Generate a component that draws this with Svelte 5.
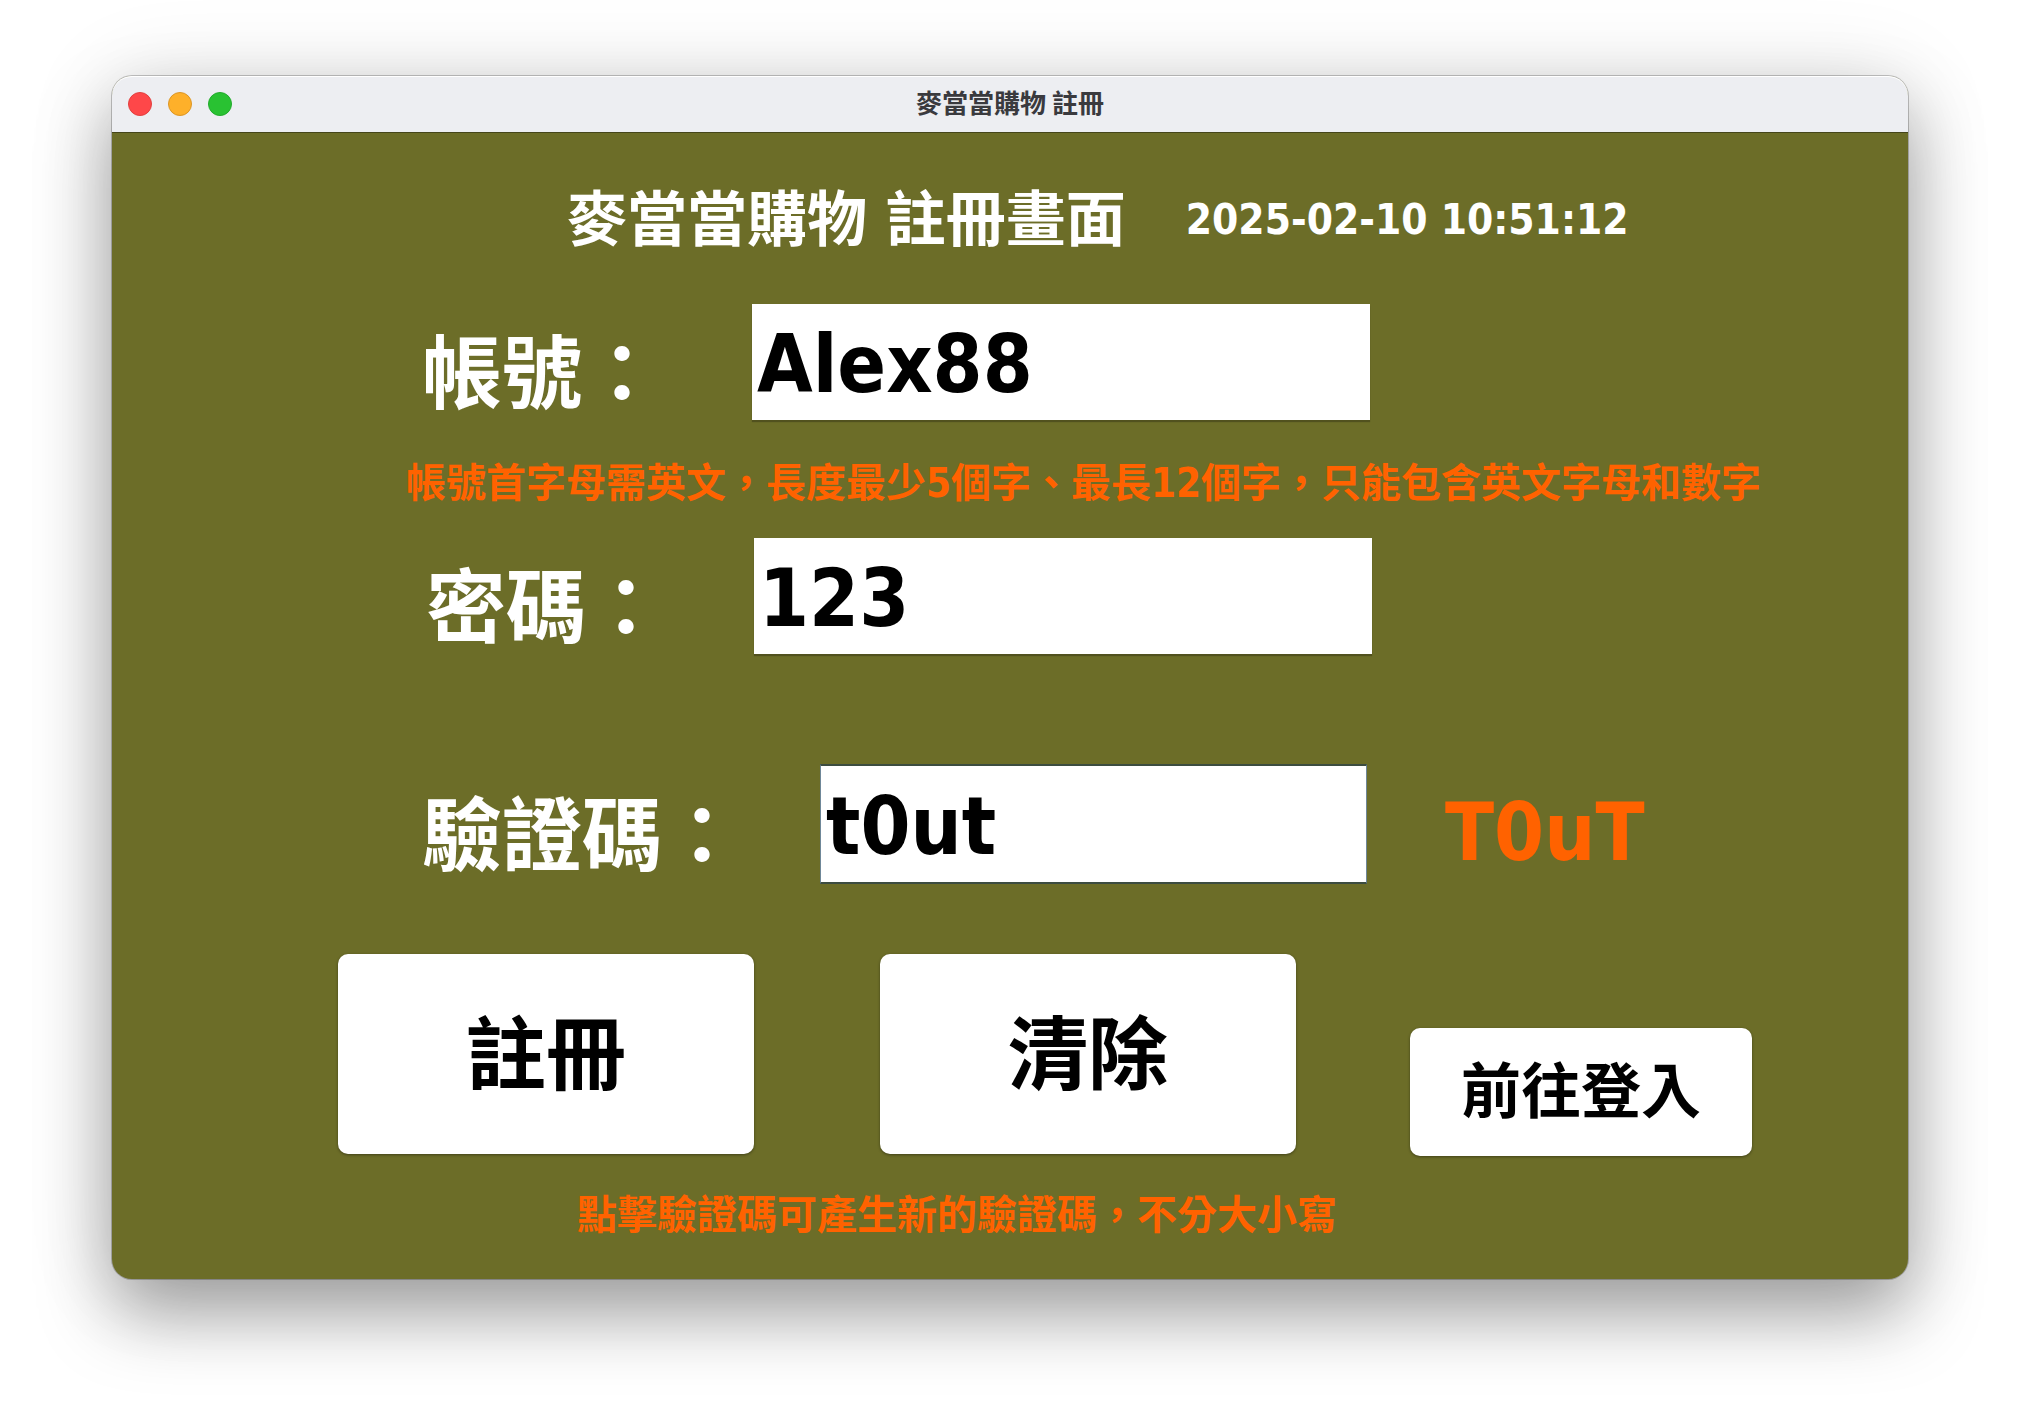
<script>
  let account = $state('Alex88');
  let password = $state('123');
  let captcha = $state('t0ut');

  function clearForm() {
    account = '';
    password = '';
    captcha = '';
  }
</script>

<main class="desktop">
  <section class="window">
    <header class="titlebar">
      <div class="lights">
        <button class="light close" type="button" aria-label="關閉"></button>
        <button class="light minimise" type="button" aria-label="縮到最小"></button>
        <button class="light zoom" type="button" aria-label="縮放"></button>
      </div>
      <span class="title">麥當當購物 註冊</span>
    </header>

    <form class="panel" onsubmit={(e) => e.preventDefault()}>
      <div class="heading">
        <h1>麥當當購物 註冊畫面</h1>
        <time datetime="2025-02-10T10:51:12">2025-02-10 10:51:12</time>
      </div>

      <div class="field account">
        <label for="account">帳號：</label>
        <input id="account" type="text" autocomplete="off" spellcheck="false" bind:value={account} />
      </div>
      <p class="hint rule">帳號首字母需英文，長度最少5個字、最長12個字，只能包含英文字母和數字</p>

      <div class="field password">
        <label for="password">密碼：</label>
        <input id="password" type="text" autocomplete="off" spellcheck="false" bind:value={password} />
      </div>

      <div class="field captcha">
        <label for="captcha">驗證碼：</label>
        <input id="captcha" type="text" autocomplete="off" spellcheck="false" bind:value={captcha} />
        <button class="code" type="button">T0uT</button>
      </div>

      <div class="actions">
        <button class="action" type="submit">註冊</button>
        <button class="action" type="button" onclick={clearForm}>清除</button>
        <button class="action login" type="button">前往登入</button>
      </div>
      <p class="hint note">點擊驗證碼可產生新的驗證碼，不分大小寫</p>
    </form>
  </section>
</main>

<style>
  :global(body) {
    background: #fff;
  }

  .desktop {
    box-sizing: border-box;
    min-height: 100vh;
    padding: 76px 112px 148px;
    overflow: hidden;
    font-family: 'DejaVu Sans Condensed', 'Noto Sans CJK TC', sans-serif;
    font-weight: 700;
  }

  .window {
    border-radius: 20px;
    background: #6c6d28;
    box-shadow:
      0 0 0 1px rgba(0, 0, 0, 0.22),
      0 36px 72px rgba(0, 0, 0, 0.34),
      0 4px 90px rgba(0, 0, 0, 0.12);
  }

  .titlebar {
    display: grid;
    grid-template-columns: 1fr auto 1fr;
    align-items: center;
    box-sizing: border-box;
    height: 57px;
    padding: 0 16px;
    border-bottom: 1px solid #45461a;
    border-radius: 20px 20px 0 0;
    background: #edeef2;
    box-shadow: inset 0 1px #fff;
  }

  .lights {
    display: flex;
    gap: 16px;
  }

  .light {
    width: 24px;
    height: 24px;
    padding: 0;
    border: 1px solid;
    border-radius: 50%;
  }

  .close {
    border-color: #e2403f;
    background: #fe4749;
  }

  .minimise {
    border-color: #dc9626;
    background: #feb02a;
  }

  .zoom {
    border-color: #22ab2c;
    background: #29c232;
  }

  .title {
    padding-bottom: 4px;
    color: #3a3a3e;
    font-family: 'Noto Sans CJK TC', sans-serif;
    font-size: 26px;
    line-height: 32px;
  }

  .panel {
    padding: 57px 0 40px;
  }

  .heading {
    display: flex;
    align-items: center;
    gap: 60px;
    padding-left: 455px;
    color: #fff;
  }

  h1 {
    margin: 0;
    font-size: 60px;
    line-height: 60px;
  }

  time {
    font-size: 42px;
    line-height: 60px;
  }

  .field {
    display: flex;
    align-items: center;
    color: #fff;
  }

  label {
    padding-top: 26px;
    font-size: 80px;
    line-height: 88px;
    white-space: nowrap;
  }

  input {
    box-sizing: border-box;
    flex: 0 1 618px;
    min-width: 0;
    height: 116px;
    padding: 4px 5px 0;
    border: 0;
    border-radius: 0;
    outline: 0;
    background: #fff;
    box-shadow: 0 2px 1px rgba(0, 0, 0, 0.25);
    color: #000;
    font: inherit;
    font-size: 80px;
  }

  .account {
    gap: 90px;
    margin-top: 54px;
    padding-left: 310px;
  }

  .password {
    gap: 88px;
    margin-top: 31px;
    padding-left: 314px;
  }

  .captcha {
    gap: 78px;
    margin-top: 110px;
    padding-left: 310px;
  }

  .captcha input {
    flex-basis: 547px;
    height: 120px;
    border: 1px solid #6f8798;
    border-width: 2px 1px;
    border-block-color: #3c4c40;
    box-shadow: none;
  }

  .code {
    padding: 18px 0 0;
    border: 0;
    background: none;
    color: #ff6200;
    font: inherit;
    font-size: 80px;
    line-height: 96px;
  }

  .hint {
    margin: 0;
    color: #ff6200;
    font-size: 40px;
    line-height: 48px;
  }

  .rule {
    margin-top: 39px;
    padding-left: 294px;
  }

  .note {
    margin-top: 35px;
    padding-left: 465px;
  }

  .actions {
    display: flex;
    align-items: flex-end;
    gap: 126px;
    margin-top: 70px;
    padding-left: 226px;
  }

  .action {
    flex: 0 1 416px;
    height: 200px;
    margin-bottom: 2px;
    padding: 0 0 12px;
    border: 0;
    border-radius: 10px;
    background: #fff;
    box-shadow: 0 1px 3px rgba(0, 0, 0, 0.4);
    color: #000;
    font: inherit;
    font-size: 80px;
  }

  .login {
    flex-basis: 342px;
    height: 128px;
    margin: 0 0 0 -12px;
    font-size: 60px;
  }
</style>
